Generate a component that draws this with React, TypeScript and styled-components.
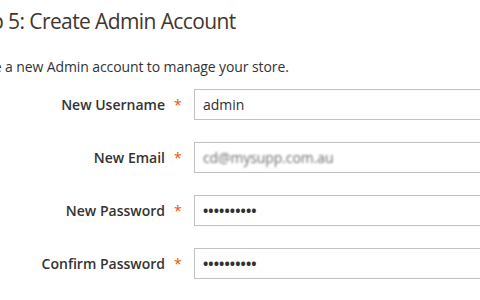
import React from 'react'
import styled, { createGlobalStyle } from 'styled-components'

const GlobalStyle = createGlobalStyle`
  html, body {
    margin: 0;
    padding: 0;
    background: #fff;
    overflow: hidden;
  }
  body {
    font-family: 'Open Sans', 'Noto Sans', sans-serif;
    color: #333;
  }
`

const Page = styled.div`
  width: 480px;
  height: 300px;
  overflow: hidden;
`

// the heading block is scrolled off to the left, so "Step" / "Create" are cut
const Intro = styled.div`
  margin-left: -38px;
  padding-top: 4px;
`

const Title = styled.h1`
  margin: 0;
  font-size: 21px;
  font-weight: 400;
  letter-spacing: -0.6px;
  line-height: 34px;
  color: #41362f;
`

const Lead = styled.p`
  margin: 19px 0 0 -3px;
  font-size: 14px;
  line-height: 20px;
  letter-spacing: -0.1px;
  color: #333;
`

const Form = styled.div`
  margin-top: 12px;
  display: grid;
  grid-template-columns: 194px 320px;
  row-gap: 22px;
`

const Label = styled.label`
  display: flex;
  align-items: center;
  justify-content: flex-end;
  gap: 9px;
  padding-right: 12px;
  font-size: 14px;
  font-weight: 600;
  color: #333;
  height: 31px;
`

const Required = styled.span`
  color: #eb5202;
  font-size: 14px;
  font-weight: 400;
  width: 8px;
`

const Field = styled.div`
  box-sizing: border-box;
  height: 31px;
  border: 1px solid #c2c2c2;
  background: #fff;
  display: flex;
  align-items: center;
  padding: 0 8px;
  font-size: 14px;
  color: #303030;
`

const Blurred = styled.span`
  filter: blur(0.8px);
  color: #3a3a3a;
  font-size: 14px;
  letter-spacing: -0.1px;
  opacity: 0.75;
`

const Dots = styled.span`
  font-size: 14px;
  font-weight: 700;
  letter-spacing: 0.1px;
  color: #303030;
`

const rows = [
  { label: 'New Username', value: 'admin', kind: 'text' },
  { label: 'New Email', value: 'cd@mysupp.com.au', kind: 'hidden' },
  { label: 'New Password', value: '••••••••••', kind: 'password' },
  { label: 'Confirm Password', value: '••••••••••', kind: 'password' },
]

export default function App() {
  return (
    <Page>
      <GlobalStyle />
      <Intro>
        <Title>Step 5: Create Admin Account</Title>
        <Lead>Create a new Admin account to manage your store.</Lead>
      </Intro>
      <Form>
        {rows.map((r) => (
          <React.Fragment key={r.label}>
            <Label>
              {r.label} <Required>*</Required>
            </Label>
            <Field>
              {r.kind === 'text' && r.value}
              {r.kind === 'hidden' && <Blurred>{r.value}</Blurred>}
              {r.kind === 'password' && <Dots>{r.value}</Dots>}
            </Field>
          </React.Fragment>
        ))}
      </Form>
    </Page>
  )
}
